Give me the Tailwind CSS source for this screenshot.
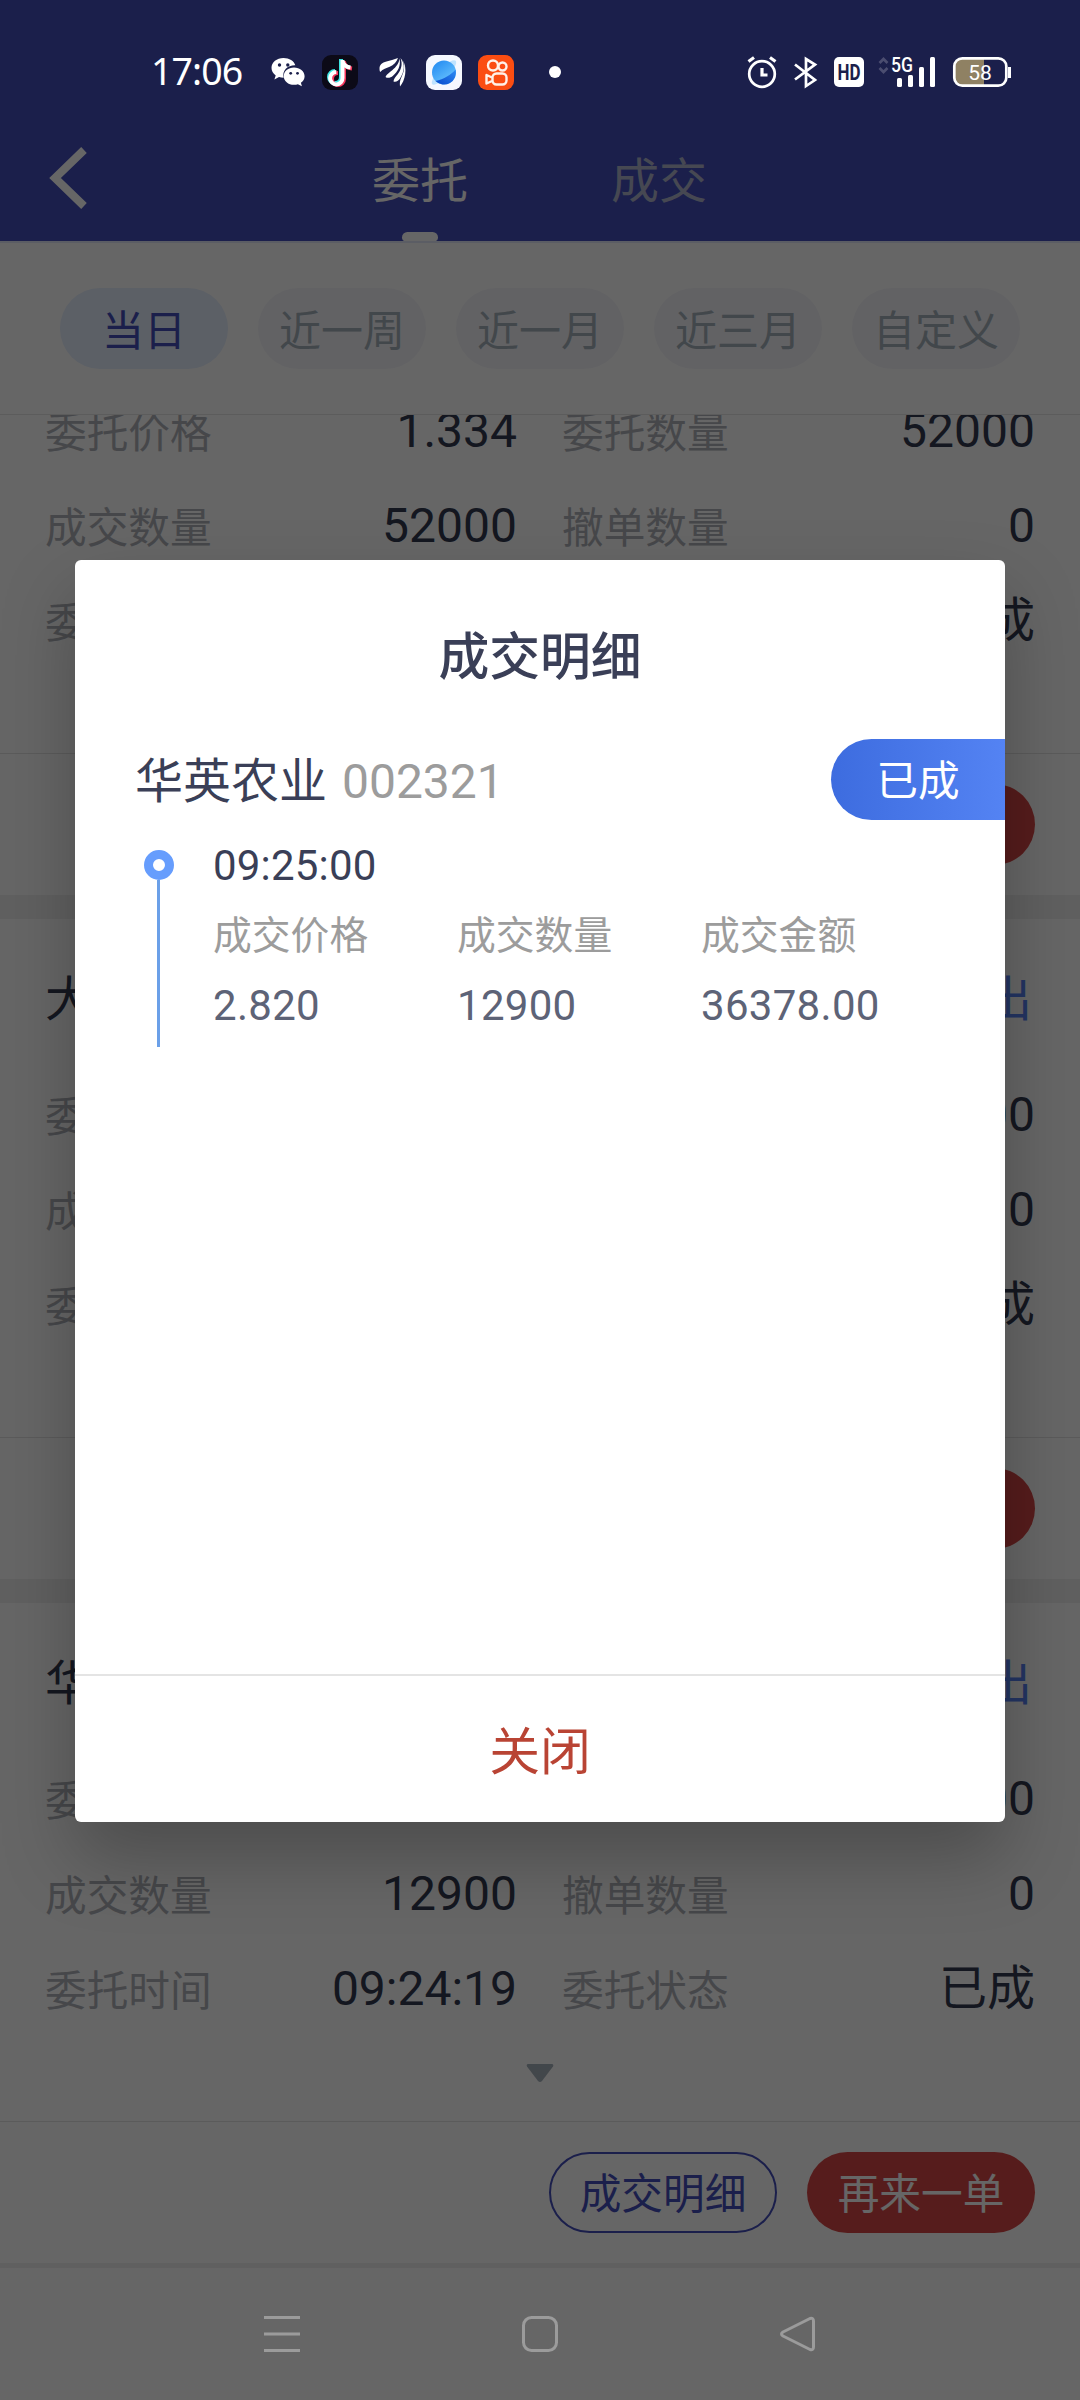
<!DOCTYPE html>
<html lang="zh-CN">
<head>
<meta charset="utf-8">
<title>委托</title>
<script src="https://cdn.jsdelivr.net/npm/@tailwindcss/browser@4"></script>
</head>
<body class="bg-black">
<div class="relative flex h-[2400px] w-[1080px] flex-col overflow-hidden bg-white font-[Roboto,'Noto_Sans_CJK_SC',sans-serif]">

  <!-- Header -->
  <header class="h-[243px] shrink-0 border-b-2 border-[#e4e9fb] bg-[#444ebc] pt-[120px]">
    <div class="flex h-[121px] items-stretch">
      <svg class="ml-[48px] mt-[27px] h-[62px] w-[40px]" viewBox="0 0 40 62" fill="none" stroke="#fff" stroke-width="8"><path d="M36 3 7 31l29 28"/></svg>
      <div class="ml-[284px] flex w-24 flex-col items-center text-[48px] leading-[123px] text-white"><span class="h-[112px]">委托</span><span class="h-[9px] w-9 rounded-t-md rounded-b-sm bg-white"></span></div>
      <div class="ml-[143px] text-[48px] leading-[123px] text-[#aeb4cc]">成交</div>
    </div>
  </header>

  <!-- Date range -->
  <nav class="flex h-[172px] shrink-0 items-center justify-center gap-[30px] border-b border-[#e6e6e6] text-[42px] text-[#a6b2bc]">
    <span class="flex h-[81px] w-[168px] items-center justify-center rounded-full bg-[#e5efff] pt-[5px] text-[#444ebc]">当日</span>
    <span class="flex h-[81px] w-[168px] items-center justify-center rounded-full bg-[#f6f6fb] pt-[5px]">近一周</span>
    <span class="flex h-[81px] w-[168px] items-center justify-center rounded-full bg-[#f6f6fb] pt-[5px]">近一月</span>
    <span class="flex h-[81px] w-[168px] items-center justify-center rounded-full bg-[#f6f6fb] pt-[5px]">近三月</span>
    <span class="flex h-[81px] w-[168px] items-center justify-center rounded-full bg-[#f6f6fb] pt-[5px]">自定义</span>
  </nav>

  <!-- Orders -->
  <main class="h-[1853px] shrink-0 overflow-hidden bg-[#efefef]">
    <div class="-mt-[180px] flex flex-col gap-6 text-[48px] text-[#343a50]">
      <section class="flex h-[660px] flex-col bg-white">
        <div class="h-[148px]"></div>
        <div class="grid auto-rows-[95px] grid-cols-[472px_473px] gap-x-[45px] px-[45px] leading-[95px]">
          <div class="flex justify-between"><span class="pt-[3px] text-[41.7px] text-[#b0b2b9]">委托价格</span><span>1.334</span></div>
          <div class="flex justify-between"><span class="pt-[3px] text-[41.7px] text-[#b0b2b9]">委托数量</span><span>52000</span></div>
          <div class="flex justify-between"><span class="pt-[3px] text-[41.7px] text-[#b0b2b9]">成交数量</span><span>52000</span></div>
          <div class="flex justify-between"><span class="pt-[3px] text-[41.7px] text-[#b0b2b9]">撤单数量</span><span>0</span></div>
          <div class="flex justify-between"><span class="pt-[3px] text-[41.7px] text-[#b0b2b9]">委托时间</span></div>
          <div class="flex justify-between"><span class="pt-[3px] text-[41.7px] text-[#b0b2b9]">委托状态</span><span>已成</span></div>
        </div>
        <div class="mt-auto flex h-[142px] items-center justify-end border-t border-[#e4e4e4] px-[45px]"><span class="h-[81px] w-[228px] rounded-full bg-[#d84846]"></span></div>
      </section>
      <section class="flex h-[660px] flex-col bg-white">
        <div class="flex h-[148px] items-center justify-between px-[45px] pt-[13px]"><span>大</span><span class="mr-[3px] text-[#5882f5]">卖出</span></div>
        <div class="grid auto-rows-[95px] grid-cols-[472px_473px] gap-x-[45px] px-[45px] leading-[95px]">
          <div class="flex justify-between"><span class="pt-[3px] text-[41.7px] text-[#b0b2b9]">委托价格</span></div>
          <div class="flex justify-between"><span class="pt-[3px] text-[41.7px] text-[#b0b2b9]">委托数量</span><span>00</span></div>
          <div class="flex justify-between"><span class="pt-[3px] text-[41.7px] text-[#b0b2b9]">成交数量</span></div>
          <div class="flex justify-between"><span class="pt-[3px] text-[41.7px] text-[#b0b2b9]">撤单数量</span><span>0</span></div>
          <div class="flex justify-between"><span class="pt-[3px] text-[41.7px] text-[#b0b2b9]">委托时间</span></div>
          <div class="flex justify-between"><span class="pt-[3px] text-[41.7px] text-[#b0b2b9]">委托状态</span><span>已成</span></div>
        </div>
        <div class="mt-auto flex h-[142px] items-center justify-end border-t border-[#e4e4e4] px-[45px]"><span class="h-[81px] w-[228px] rounded-full bg-[#d84846]"></span></div>
      </section>
      <section class="flex h-[660px] flex-col bg-white">
        <div class="flex h-[148px] items-center justify-between px-[45px] pt-[13px]"><span>华英农业</span><span class="mr-[3px] text-[#5882f5]">卖出</span></div>
        <div class="grid auto-rows-[95px] grid-cols-[472px_473px] gap-x-[45px] px-[45px] leading-[95px]">
          <div class="flex justify-between"><span class="pt-[3px] text-[41.7px] text-[#b0b2b9]">委托价格</span></div>
          <div class="flex justify-between"><span class="pt-[3px] text-[41.7px] text-[#b0b2b9]">委托数量</span><span>12900</span></div>
          <div class="flex justify-between"><span class="pt-[3px] text-[41.7px] text-[#b0b2b9]">成交数量</span><span>12900</span></div>
          <div class="flex justify-between"><span class="pt-[3px] text-[41.7px] text-[#b0b2b9]">撤单数量</span><span>0</span></div>
          <div class="flex justify-between"><span class="pt-[3px] text-[41.7px] text-[#b0b2b9]">委托时间</span><span>09:24:19</span></div>
          <div class="flex justify-between"><span class="pt-[3px] text-[41.7px] text-[#b0b2b9]">委托状态</span><span>已成</span></div>
        </div>
        <svg class="mx-auto mt-[28px] h-[19px] w-[28px]" viewBox="0 0 28 19"><path fill="#a6b2bc" d="M2 0h24q2 .5 1 2.500L16 17q-2 2-4 0L1 2.500Q0 .5 2 0z"/></svg>
        <div class="mt-auto flex h-[142px] items-center justify-end gap-[30px] border-t border-[#e4e4e4] px-[45px] text-[41.7px]">
          <span class="flex h-[81px] w-[228px] items-center justify-center rounded-full border-2 border-[#444ebc] pt-[6px] text-[#444ebc]">成交明细</span>
          <span class="flex h-[81px] w-[228px] items-center justify-center rounded-full bg-[#d84846] pt-[6px] text-white">再来一单</span>
        </div>
      </section>
    </div>
  </main>

  <!-- Scrim, status bar, dialog and system navigation -->
  <div class="absolute inset-0 flex flex-col bg-black/60">
    <div class="flex h-[144px] shrink-0 text-white">
      <span class="ml-[151px] mt-[43px] w-[94px] font-['Noto_Sans'] text-[37.5px] leading-[56px] tracking-[-0.9px]">17:06</span>
      <svg class="ml-[25px] mt-[54px] h-[38px] w-[246px]" viewBox="270 54 246 38">
        <g fill="#fff"><path d="M283.500 58c-6.800 0-12 4.300-12 9.800 0 3 1.500 5.700 4.200 7.600l-1.300 4 4.600-2.300c1.600.4 3 .6 4.600.6-1.700-7 4-12.600 11.700-12.400-1.200-4.300-6-7.300-11.800-7.300z"/><path d="M294 67.500c-5.800 0-10.300 3.800-10.300 8.700 0 4.800 4.500 8.600 10.300 8.600 1.400 0 2.700-.2 3.900-.6l4 2-1-3.400c2.300-1.600 3.700-4 3.700-6.600 0-4.900-4.800-8.700-10.600-8.700z"/></g>
        <g fill="#1b1f4b"><circle cx="279.500" cy="65" r="1.700"/><circle cx="287.800" cy="65" r="1.700"/><circle cx="290.700" cy="73.300" r="1.400"/><circle cx="297.500" cy="73.300" r="1.400"/></g>
        <rect x="322" y="55" width="36" height="35" rx="9" fill="#0c0a17"/>
        <g fill="none" stroke-width="4"><path stroke="#3fe6e4" d="M341 59v18a6 6 0 1 1-6-6M341 61c1 4 4 6 8 6.500"/><path stroke="#f5365c" d="M344 61v18a6 6 0 1 1-6-6M344 62c1 4 4 6 8 6.500"/><path stroke="#fff" d="M342.500 60v18a6.200 6.200 0 1 1-6.200-6M342.500 61c1 4 4 6 8 6.500"/></g>
        <g fill="#fff"><path d="M398 58c-4 1.500-8 2.500-11.500 3.500-4.500 1-7 3.500-7 7 0 1.500.2 2.800.7 3.500 3-3.200 6-3.700 9.500-5.200 4-1.800 7-4.800 8.300-8.800z"/><path d="M399.500 58.500c-.5 5-3.500 8.500-7 11.500-3 2.500-6 4.200-7 7 2 1.500 5 1 7.500-1.200 5-4.300 8-10 6.500-17.300z"/><path d="M400.500 58c2.500 6.500.5 12-3 16.500-2 2.600-4 4.500-4 7 2.500.8 5-.5 6.500-3 4.500-7 5.500-14.500.5-20.500z"/><path d="M402.500 60c3 6 1.500 12-1 17-1.500 3-2 5.500-1.500 9.500 5-5.500 8-18.500 2.500-26.500z"/></g>
        <defs><linearGradient id="p" x1="0" y1="0" x2=".7" y2="1"><stop stop-color="#1e86f0"/><stop offset="1" stop-color="#6cc7ff"/></linearGradient><linearGradient id="q" x1="0" y1="1" x2="1" y2="0"><stop stop-color="#0648cb"/><stop offset="1" stop-color="#2f8df5"/></linearGradient></defs>
        <rect x="426" y="55" width="36" height="35" rx="9" fill="#f5f8ff"/>
        <ellipse cx="444" cy="72.500" rx="16.500" ry="5" transform="rotate(-45 444 72.500)" fill="#bfe3ff"/>
        <circle cx="444" cy="72.500" r="12" fill="url(#p)"/><path d="M455.600 69.500A12 12 0 0 1 435.500 81C444 79 451 75 455.600 69.500z" fill="url(#q)"/>
        <rect x="478" y="55" width="36" height="35" rx="9" fill="#fb4d12"/>
        <g fill="none" stroke="#fff1e8" stroke-width="2.400"><circle cx="493" cy="65.500" r="5"/><circle cx="502.500" cy="66.500" r="4"/><rect x="492.500" y="73.500" width="14" height="11" rx="4"/><path stroke-linejoin="round" d="M492 77.500 486.500 75v8.500l5.500-2.500"/></g>
      </svg>
      <span class="ml-[33px] mt-[66px] size-3 rounded-full bg-white"></span>
      <svg class="ml-auto mr-[65px] mt-[54px] h-[38px] w-[270px]" viewBox="745 54 270 38" fill="none" stroke="#fff" stroke-width="2.700">
        <circle cx="762" cy="74" r="12.800"/><path d="M762 68v7h5.500M748.500 61.500l5.500-4M775.500 61.500l-5.500-4" stroke-width="3.200"/>
        <path d="m795 64.500 20 15.500-9 6V59l9 5.500L795 79.500"/>
        <rect x="834" y="57" width="30" height="30" rx="5" fill="#fff" stroke="none"/>
        <text x="849" y="79.500" text-anchor="middle" textLength="23" lengthAdjust="spacingAndGlyphs" fill="#1b1f4b" stroke="none" font-family="Roboto" font-size="22" font-weight="700">HD</text>
        <path stroke="#4b4d70" d="m879.500 63 4-4 4 4M879.500 68l4 4 4-4"/>
        <text x="891" y="72" fill="#fff" stroke="none" textLength="22" lengthAdjust="spacingAndGlyphs" font-family="Roboto" font-size="20" font-weight="500">5G</text>
        <g fill="#fff" stroke="none"><rect x="897" y="78" width="5" height="9" rx="1.500"/><rect x="908" y="75" width="5" height="12" rx="1.500"/><rect x="919" y="67" width="5" height="20" rx="1.500"/><rect x="930" y="57" width="5" height="30" rx="1.500"/></g>
        <path fill="#8f8163" stroke="none" d="M962 58.500h22v27h-22q-7-1-7-7v-13q0-6 7-7z"/><rect x="954.300" y="58.300" width="52" height="27.400" rx="8"/><path d="M1009.500 67v11" stroke-width="3"/>
        <text x="980" y="79.500" text-anchor="middle" fill="#fff" stroke="none" font-family="Roboto" font-size="21">58</text>
      </svg>
    </div>

    <div class="mx-auto mt-[416px] flex h-[1262px] w-[930px] shrink-0 flex-col rounded-md bg-white shadow-[0_36px_72px_rgba(0,0,0,0.25)]">
      <h1 class="mt-[50px] text-center text-[50.8px] leading-[96px] font-medium text-[#3a3f57]">成交明细</h1>
      <div class="mt-[33px] flex h-[81px] items-center justify-between pl-[60px] text-[48px] text-[#3a3f57]">
        <span class="pt-1">华英农业 <span class="ml-[3px] text-[#9c9c9c]">002321</span></span>
        <span class="flex h-[81px] w-[174px] items-center justify-center rounded-l-full bg-linear-to-r from-[#3d6cdf] to-[#5483f3] pt-[6px] text-[41.7px] text-white">已成</span>
      </div>
      <div class="mt-[30px] flex pl-[69px]">
        <div class="flex w-[30px] flex-col items-center"><span class="size-[30px] rounded-full border-9 border-[#669dfd]"></span><span class="mr-px h-[167px] w-[3px] bg-[#6ba0e8]"></span></div>
        <div class="-mt-[19px] ml-[39px]">
          <div class="text-[42px] leading-[70px] tracking-[0.2px] text-[#3a3f57]">09:25:00</div>
          <div class="grid grid-cols-[244px_244px_244px] text-[38.8px] leading-[70px] text-[#9c9c9c]"><span>成交价格</span><span>成交数量</span><span>成交金额</span></div>
          <div class="grid grid-cols-[244px_244px_244px] text-[42px] leading-[69px] tracking-[0.3px] text-[#5d6377]"><span>2.820</span><span>12900</span><span>36378.00</span></div>
        </div>
      </div>
      <div class="mt-auto h-[148px] border-t-2 border-[#e4e4e4] text-center text-[50.8px] leading-[153px] text-[#b94434]">关闭</div>
    </div>

    <div class="mt-auto flex h-[132px] items-center justify-between bg-[#666] px-[264px]">
      <svg class="h-9 w-9" viewBox="0 0 36 36" stroke="#9b9b9b" stroke-width="3"><path d="M0 1.500h36M0 18h36M0 34.500h36"/></svg>
      <svg class="h-9 w-9" viewBox="0 0 36 36" fill="none" stroke="#9b9b9b" stroke-width="3"><rect x="1.500" y="1.500" width="33" height="33" rx="8"/></svg>
      <svg class="h-9 w-9" viewBox="0 0 36 36" fill="none" stroke="#9b9b9b" stroke-width="3" stroke-linejoin="round"><path d="M30 2.500 3 16q-3 2 0 4l27 13.500q3.500 1 3.500-2.500V5q0-3.500-3.500-2.500z"/></svg>
    </div>
  </div>
</div>
</body>
</html>
